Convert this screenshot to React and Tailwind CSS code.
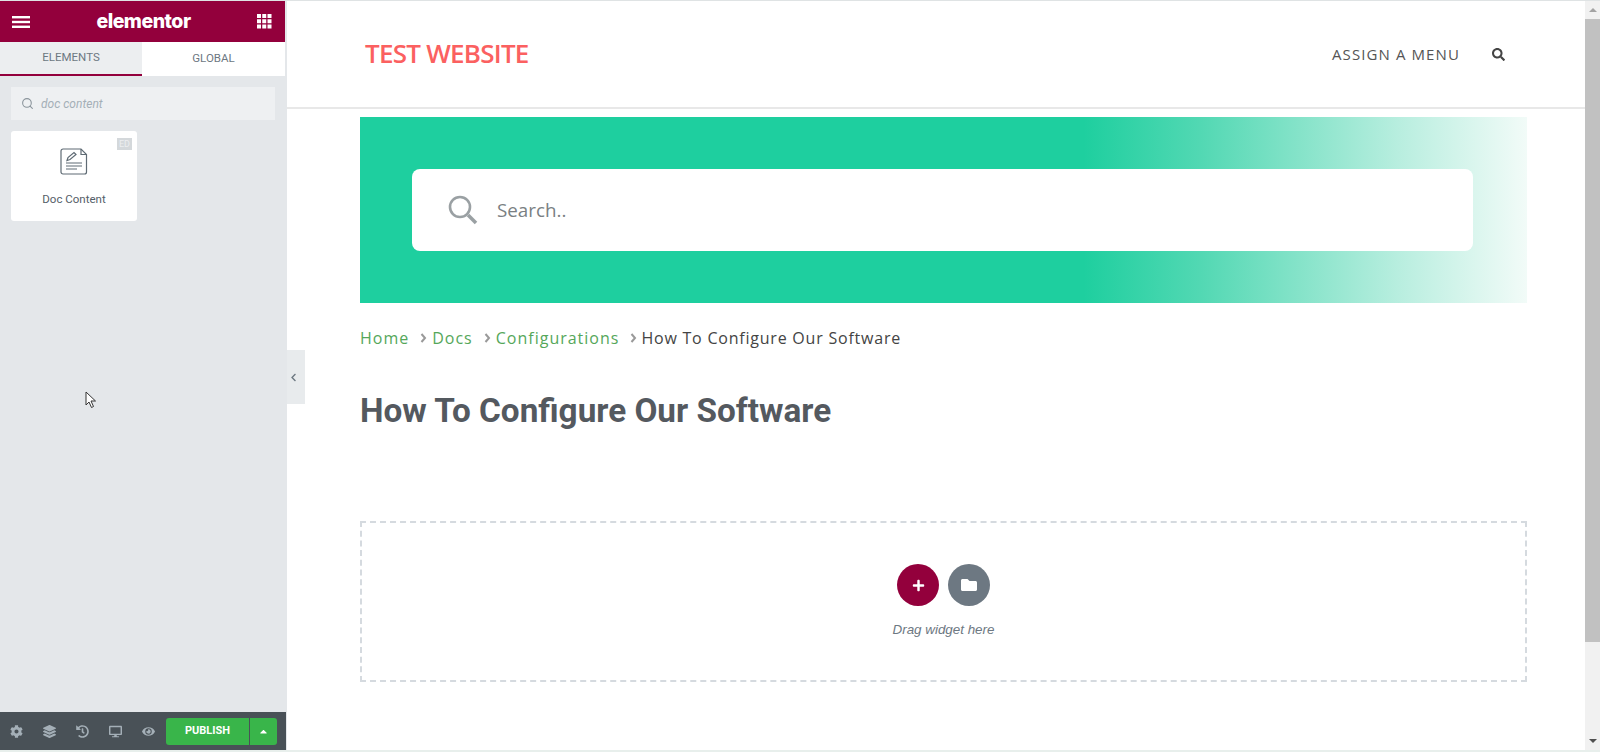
import { FaCog, FaLayerGroup, FaHistory, FaDesktop, FaEye, FaCaretUp, FaPlus, FaFolder, FaSearch, FaChevronLeft } from "react-icons/fa";
import { Search } from "lucide-react";

function MenuIcon() {
  return (
    <svg width="18" height="12" viewBox="0 0 18 12" fill="#fff">
      <rect y="0" width="18" height="2.400" />
      <rect y="4.800" width="18" height="2.400" />
      <rect y="9.600" width="18" height="2.400" />
    </svg>
  );
}

function GridIcon() {
  return (
    <svg width="15" height="15" viewBox="0 0 15 15" fill="#fff">
      {[0, 5.25, 10.5].map((y) =>
        [0, 5.25, 10.5].map((x) => <rect key={`${x}-${y}`} x={x} y={y} width="4" height="4" />)
      )}
    </svg>
  );
}

function DocIcon() {
  return (
    <svg width="28" height="27" viewBox="0 0 28 27" fill="none" stroke="#5f6b74" strokeWidth="1.2">
      <path d="M3 1h18l5.500 5.500V24a2 2 0 0 1-2 2H3a2 2 0 0 1-2-2V3a2 2 0 0 1 2-2z" />
      <path d="M21 1v5.500h5.500" />
      <path d="M7 12.500l1-3 6-5 2 2-6 5z" />
      <path d="M6 15h16M6 18h16M6 21h11" />
    </svg>
  );
}

function BigSearchIcon() {
  return (
    <svg width="30" height="30" viewBox="0 0 30 30" fill="none" stroke="#9aa0a3" className="shrink-0">
      <circle cx="12" cy="12" r="10" strokeWidth="2.600" />
      <path d="M20 20l8 8" strokeWidth="3.600" />
    </svg>
  );
}

function Crumb({ children }) {
  return <span className="text-[#55a75a] tracking-[1px]">{children}</span>;
}

function Sep() {
  return (
    <svg width="7" height="10" viewBox="0 0 7 10" fill="none" stroke="#9a9a9a" strokeWidth="2" className="block">
      <path d="M1.500 1l3.500 4-3.500 4" />
    </svg>
  );
}

function Sidebar() {
  return (
    <aside className="w-[287px] shrink-0 flex flex-col bg-[#e4e7ea] font-['Roboto',sans-serif]">
      <div className="mr-[2px] bg-white">
        <div className="h-[41px] bg-[#93003c] flex items-center justify-between pl-3 pr-[13px] text-white">
          <MenuIcon />
          <span className="text-[19.500px] font-['Inter',sans-serif] font-extrabold tracking-[-0.5px]">elementor</span>
          <GridIcon />
        </div>
        <div className="h-[34px] flex text-[11.500px] text-[#6d7882]">
          <div className="w-[142px] flex items-center justify-center bg-[#eceef0] border-b-2 border-[#93003c]">ELEMENTS</div>
          <div className="flex-1 flex items-center justify-center">GLOBAL</div>
        </div>
      </div>
      <div className="mt-[11px] ml-[11px] w-[264px] h-[33px] bg-[#eef0f2] flex items-center px-2.5 gap-[7px] text-[#a4afb7]">
        <Search size={13} strokeWidth={2} className="text-[#8a949b]" />
        <span className="text-[12px] italic">doc content</span>
      </div>
      <div className="relative mt-[11px] ml-[11px] w-[126px] h-[90px] bg-white rounded-[3px] flex flex-col items-center">
        <span className="absolute top-[7px] right-[5px] w-[15px] h-[12px] bg-[#d4d8db] text-[9px] leading-[12px] text-center text-[#eceef0]">ED</span>
        <div className="mt-[17px]"><DocIcon /></div>
        <span className="mt-[16px] text-[11.500px] text-[#556068]">Doc Content</span>
      </div>
      <div className="mt-auto mr-px h-[38px] pt-px bg-[#495157] flex items-center pl-[10px] pr-[9px] text-[#a4afb7]">
        <div className="flex items-center gap-[20px]">
          <FaCog className="w-[13px] h-[13px]" />
          <FaLayerGroup className="w-[13px] h-[13px]" />
          <FaHistory className="w-[13px] h-[13px]" />
          <FaDesktop className="w-[13px] h-[13px]" />
          <FaEye className="w-[13px] h-[13px]" />
        </div>
        <div className="ml-auto flex h-[27px] text-white">
          <div className="w-[83px] bg-[#39b54a] rounded-l-[3px] flex items-center justify-center text-[11px] font-bold">PUBLISH</div>
          <div className="w-[27px] ml-px bg-[#39b54a] rounded-r-[3px] flex items-center justify-center">
            <FaCaretUp className="w-[11px] h-[11px]" />
          </div>
        </div>
      </div>
    </aside>
  );
}

function Canvas() {
  return (
    <main className="flex-1 min-w-0 bg-white flex flex-col">
      <header className="h-[108px] shrink-0 flex items-center justify-between pl-[78px] pr-[80px] border-b-2 border-[#e8e8e8] font-['Open_Sans',sans-serif]">
        <span className="-mt-px text-[26px] font-semibold tracking-[-0.75px] text-[#fb6060]">TEST WEBSITE</span>
        <div className="flex items-center gap-[32px] text-[#555]">
          <span className="text-[15px] tracking-[1.1px]">ASSIGN A MENU</span>
          <FaSearch className="w-[13px] h-[13px] text-[#444]" />
        </div>
      </header>
      <div className="ml-[73px] mr-[58px] flex flex-col">
        <section className="mt-[8px] h-[186px] pl-[52px] pr-[54px] flex items-center bg-[linear-gradient(90deg,#1ecf9f_0%,#1ecf9f_62%,#52d8b3_72%,#b8eedf_89%,#f2fbf8_100%)]">
          <div className="w-full h-[82px] bg-white rounded-[8px] flex items-center pl-[36px] gap-[19px]">
            <BigSearchIcon />
            <span className="text-[18.800px] text-[#7a7f83] font-['Open_Sans',sans-serif]">Search..</span>
          </div>
        </section>
        <nav className="mt-[23px] h-[24px] flex items-center text-[16px] tracking-[0.78px] text-[#444] font-['Open_Sans',sans-serif]">
          <Crumb>Home</Crumb>
          <span className="ml-[11px] mr-[5px]"><Sep /></span>
          <Crumb>Docs</Crumb>
          <span className="ml-[11px] mr-[5px]"><Sep /></span>
          <Crumb>Configurations</Crumb>
          <span className="ml-[11px] mr-[4px]"><Sep /></span>
          <span>How To Configure Our Software</span>
        </nav>
        <h1 className="mt-[39px] text-[33.300px] leading-[44px] font-bold text-[#54595f] font-['Roboto',sans-serif]">How To Configure Our Software</h1>
        <section className="mt-[88px] h-[161px] border-2 border-dashed border-[#d5dadf] flex flex-col items-center pt-[41px] font-['Liberation_Sans',sans-serif]">
          <div className="flex gap-[9px] text-white">
            <div className="w-[42px] h-[42px] rounded-full bg-[#93003c] flex items-center justify-center">
              <FaPlus className="w-[13px] h-[13px]" />
            </div>
            <div className="w-[42px] h-[42px] rounded-full bg-[#6d7882] flex items-center justify-center">
              <FaFolder className="w-[16px] h-[16px]" />
            </div>
          </div>
          <span className="mt-[14px] text-[13.400px] italic text-[#6d7882]">Drag widget here</span>
        </section>
      </div>
    </main>
  );
}

function Scrollbar() {
  return (
    <div className="w-[15px] shrink-0 bg-[#f1f1f1] flex flex-col items-center">
      <div className="h-[18px] flex items-center justify-center">
        <div className="w-0 h-0 border-x-[4px] border-x-transparent border-b-[4px] border-b-[#a3a3a3]" />
      </div>
      <div className="w-full h-[623px] bg-[#c1c1c1]" />
      <div className="mt-auto h-[18px] flex items-center justify-center">
        <div className="w-0 h-0 border-x-[4px] border-x-transparent border-t-[4px] border-t-[#505050]" />
      </div>
    </div>
  );
}

export default function App() {
  return (
    <div className="relative h-[752px] overflow-hidden bg-white flex border-t border-b-2 border-t-[#dfe3e4] border-b-[#e8efec]">
      <Sidebar />
      <Canvas />
      <Scrollbar />
      {/* collapse tab overlapping the canvas edge */}
      <div className="absolute left-[287px] top-[349px] w-[18px] h-[54px] bg-[#e8ebed] flex items-center pl-[3px] text-[#6d7882]">
        <FaChevronLeft className="w-[7px] h-[9px]" />
      </div>
      {/* mouse pointer */}
      <svg className="absolute left-[85px] top-[390px]" width="12" height="18" viewBox="0 0 12 18">
        <path d="M1 1v13l3-3 2.500 5.500 2-1L6 10h4.500z" fill="#fff" stroke="#333" strokeWidth="1" />
      </svg>
    </div>
  );
}
